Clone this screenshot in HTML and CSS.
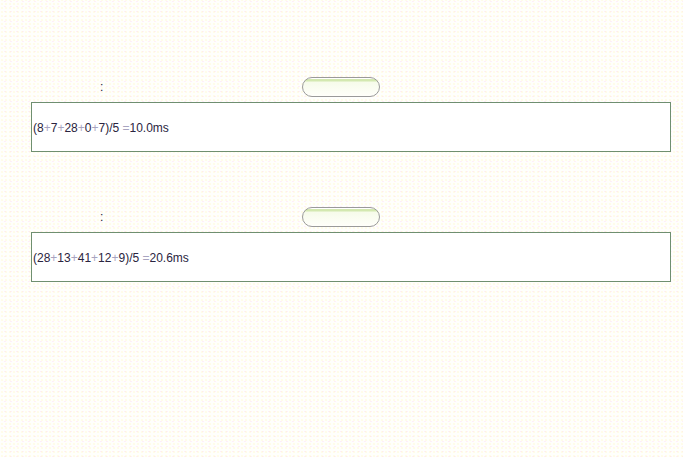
FILE: index.html
```html
<!DOCTYPE html>
<html>
<head>
<meta charset="utf-8">
<link rel="stylesheet" href="styles.css">
</head>
<body>
<div class="page">
  <div class="section">
    <div class="row">
      <span class="label"><span class="faint">结果</span>:</span>
      <button class="pill" type="button"></button>
    </div>
    <div class="result">(8<span class="op">+</span>7<span class="op">+</span>28<span class="op">+</span>0<span class="op">+</span>7)/5 <span class="op">=</span>10.0ms</div>
  </div>
  <div class="section">
    <div class="row">
      <span class="label"><span class="faint">结果</span>:</span>
      <button class="pill" type="button"></button>
    </div>
    <div class="result">(28<span class="op">+</span>13<span class="op">+</span>41<span class="op">+</span>12<span class="op">+</span>9)/5 <span class="op">=</span>20.6ms</div>
  </div>
</div>
</body>
</html>
```
FILE: styles.css
```css
html, body {
  margin: 0;
  padding: 0;
}
body {
  background-color: #fffffc;
  background-image:
    radial-gradient(circle, rgba(255, 240, 150, 0.4) 0.6px, transparent 0.8px),
    radial-gradient(circle, rgba(255, 200, 240, 0.3) 0.6px, transparent 0.8px);
  background-size: 4px 4px, 6px 5px;
  background-position: 0 2px, 2px 4px;
  font-family: "Liberation Sans", Arial, sans-serif;
  font-size: 12px;
  color: #2a2440;
  min-height: 457px;
}
.page {
  padding-top: 77px;
}
.section {
  margin-bottom: 55px;
}
.row {
  display: flex;
  align-items: center;
  height: 20px;
}
.label {
  width: 302px;
  box-sizing: border-box;
  padding-left: 78px;
  font-family: "Liberation Sans", "Noto Sans CJK SC", sans-serif;
  font-size: 12px;
  line-height: 20px;
  color: #2a2440;
}
.faint {
  color: rgba(255, 255, 255, 0);
  font-size: 11px;
}
.pill {
  width: 78px;
  height: 20px;
  box-sizing: border-box;
  border: 1px solid #9a9a9a;
  border-radius: 10px;
  background: linear-gradient(to bottom, #ffffff 0, #ffffff 1px, #d3e8b0 1px, #d3e8b0 3px, #f6fbea 4px, #fffffa 100%);
  padding: 0;
  margin: 0;
}
.result {
  margin: 5px 0 0 31px;
  width: 640px;
  height: 50px;
  box-sizing: border-box;
  border: 1px solid #6f8f70;
  background: #ffffff;
  display: flex;
  align-items: center;
  padding-left: 1px;
  padding-top: 2px;
  white-space: pre;
}
.op {
  color: #a8a4c0;
}
```
